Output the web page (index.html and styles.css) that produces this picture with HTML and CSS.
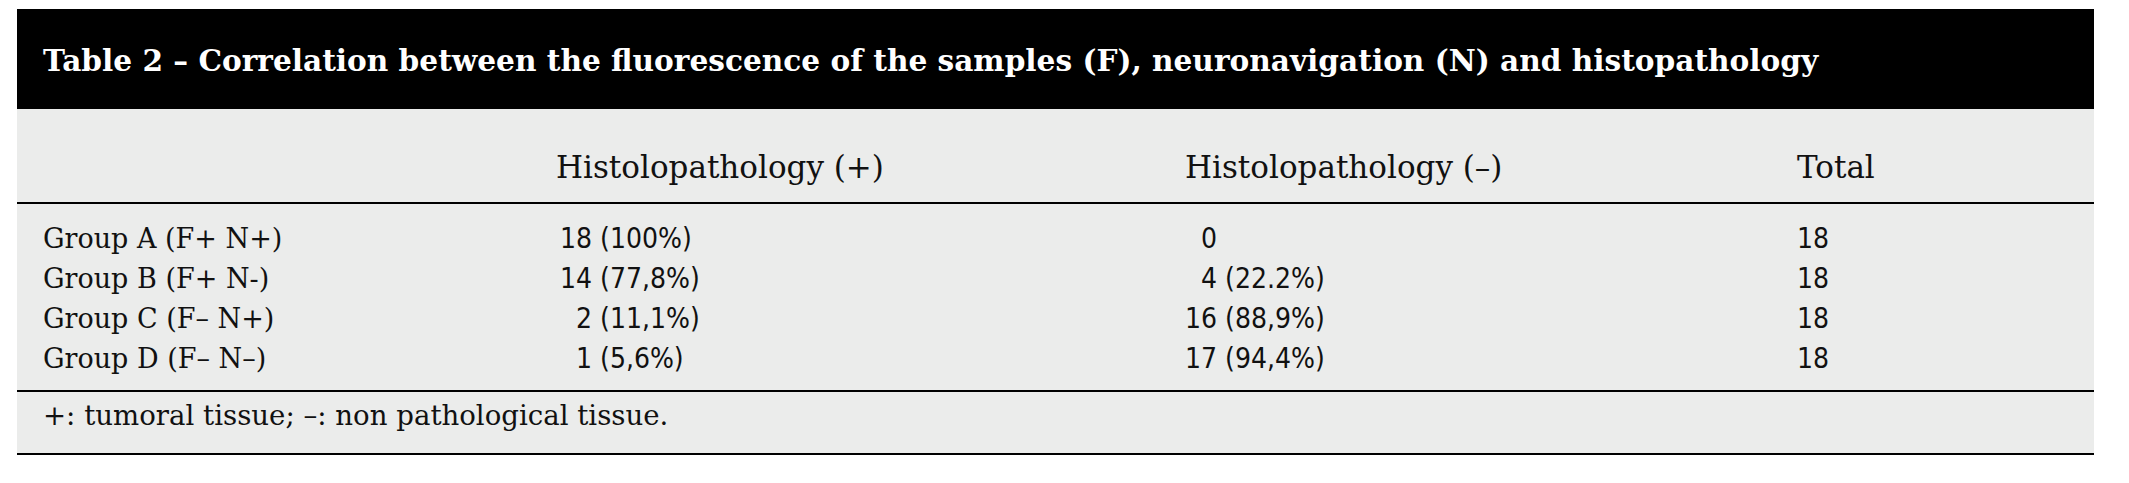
FILE: index.html
```html
<!DOCTYPE html>
<html lang="en">
<head>
<meta charset="utf-8">
<title>Table 2</title>
<link rel="stylesheet" href="styles.css">
</head>
<body>
<div class="table-box">
  <div class="caption">Table 2 – Correlation between the fluorescence of the samples (F), neuronavigation (N) and histopathology</div>
  <div class="grid head-row">
    <div class="cell"></div>
    <div class="cell colhead">Histolopathology (+)</div>
    <div class="cell colhead">Histolopathology (–)</div>
    <div class="cell colhead">Total</div>
  </div>
  <div class="grid body-rows">
    <div class="cell label">Group A (F+ N+)</div>
    <div class="cell num shift">18 (100%)</div>
    <div class="cell num">&#8199;0</div>
    <div class="cell num">18</div>

    <div class="cell label">Group B (F+ N-)</div>
    <div class="cell num shift">14 (77,8%)</div>
    <div class="cell num">&#8199;4 (22.2%)</div>
    <div class="cell num">18</div>

    <div class="cell label">Group C (F– N+)</div>
    <div class="cell num shift">&#8199;2 (11,1%)</div>
    <div class="cell num">16 (88,9%)</div>
    <div class="cell num">18</div>

    <div class="cell label">Group D (F– N–)</div>
    <div class="cell num shift">&#8199;1 (5,6%)</div>
    <div class="cell num">17 (94,4%)</div>
    <div class="cell num">18</div>
  </div>
  <div class="foot">+: tumoral tissue; –: non pathological tissue.</div>
</div>
</body>
</html>
```

FILE: styles.css
```css
html, body {
  margin: 0;
  padding: 0;
  background: #ffffff;
}

body {
  padding: 9px 0 0 17px;
}

.table-box {
  width: 2077px;
  background: #ebeceb;
  color: #111111;
  font-family: "DejaVu Serif", serif;
}

.caption {
  background: #000000;
  color: #ffffff;
  font-weight: bold;
  font-size: 29.6px;
  line-height: 40px;
  padding: 32px 26px 28px 26px;
  white-space: nowrap;
}

.grid {
  display: grid;
  grid-template-columns: 513px 629px 612px 1fr;
  padding-left: 26px;
  align-items: baseline;
}

.head-row {
  padding-top: 38px;
  padding-bottom: 15px;
  border-bottom: 2px solid #000000;
}

.colhead {
  font-size: 31px;
  line-height: 40px;
  white-space: nowrap;
}

.body-rows {
  padding-top: 15px;
  padding-bottom: 11px;
  border-bottom: 2px solid #000000;
}

.cell {
  line-height: 40px;
  white-space: nowrap;
}

.label {
  font-size: 27px;
}

.num {
  font-family: "DejaVu Sans Condensed", "DejaVu Sans", sans-serif;
  font-stretch: condensed;
  font-size: 28px;
}

.shift {
  padding-left: 4px;
}

.foot {
  font-size: 27.6px;
  line-height: 40px;
  padding: 4px 26px 17px 26px;
  border-bottom: 2px solid #000000;
}
```
